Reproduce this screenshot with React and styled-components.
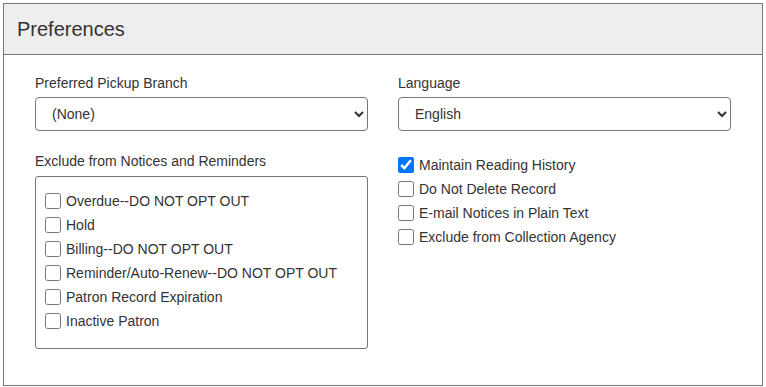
import React from 'react';
import styled, { createGlobalStyle } from 'styled-components';

const GlobalStyle = createGlobalStyle`
  * {
    box-sizing: border-box;
  }
  body {
    margin: 0;
    background: #fff;
    font-family: "Liberation Sans", Arial, sans-serif;
    color: #333;
  }
`;

const Panel = styled.section`
  margin: 3px;
  width: 760px;
  border: 1px solid #777;
  background: #fff;
`;

const Header = styled.div`
  height: 51px;
  display: flex;
  align-items: center;
  padding: 0 13px;
  background: #eee;
  border-bottom: 1px solid #777;
`;

const Title = styled.h2`
  margin: 0;
  font-size: 20px;
  font-weight: normal;
  color: #333;
`;

const Body = styled.div`
  display: grid;
  grid-template-columns: 333px 333px;
  column-gap: 30px;
  padding: 18px 31px 36px;
`;

const Column = styled.div`
  display: flex;
  flex-direction: column;
`;

const Label = styled.label`
  display: block;
  font-size: 14px;
  line-height: 20px;
  margin-bottom: ${p => p.$gap ?? 4}px;
`;

const Select = styled.select`
  width: 100%;
  height: 34px;
  padding: 0 12px;
  font-family: inherit;
  font-size: 14px;
  color: #333;
  background: #fff;
  border: 1px solid #767676;
  border-radius: 4px;
`;

const Group = styled.div`
  margin-top: ${p => p.$top}px;
`;

const Box = styled.div`
  height: 173px;
  border: 1px solid #767676;
  border-radius: 3px;
  padding: 12px 9px 14px;
`;

const Row = styled.label`
  display: flex;
  align-items: center;
  height: 24px;
  font-size: 14px;
  color: #333;
`;

const Check = styled.input.attrs({ type: 'checkbox' })`
  width: 16px;
  height: 16px;
  margin: 0 5px 0 0;
  accent-color: #0075ff;
`;

const notices = [
  'Overdue--DO NOT OPT OUT',
  'Hold',
  'Billing--DO NOT OPT OUT',
  'Reminder/Auto-Renew--DO NOT OPT OUT',
  'Patron Record Expiration',
  'Inactive Patron',
];

const options = [
  { text: 'Maintain Reading History', checked: true },
  { text: 'Do Not Delete Record', checked: false },
  { text: 'E-mail Notices in Plain Text', checked: false },
  { text: 'Exclude from Collection Agency', checked: false },
];

const App = () => {
  return (
    <>
      <GlobalStyle />
      <Panel>
        <Header>
          <Title>Preferences</Title>
        </Header>
        <Body>
          <Column>
            <Label htmlFor="branch">Preferred Pickup Branch</Label>
            <Select id="branch" defaultValue="none">
              <option value="none">(None)</option>
            </Select>
            <Group $top={20}>
              <Label $gap={5}>Exclude from Notices and Reminders</Label>
              <Box>
                {notices.map(n => (
                  <Row key={n}>
                    <Check />
                    {n}
                  </Row>
                ))}
              </Box>
            </Group>
          </Column>
          <Column>
            <Label htmlFor="lang">Language</Label>
            <Select id="lang" defaultValue="en">
              <option value="en">English</option>
            </Select>
            <Group $top={22}>
              {options.map(o => (
                <Row key={o.text}>
                  <Check defaultChecked={o.checked} />
                  {o.text}
                </Row>
              ))}
            </Group>
          </Column>
        </Body>
      </Panel>
    </>
  );
};

export default App;
